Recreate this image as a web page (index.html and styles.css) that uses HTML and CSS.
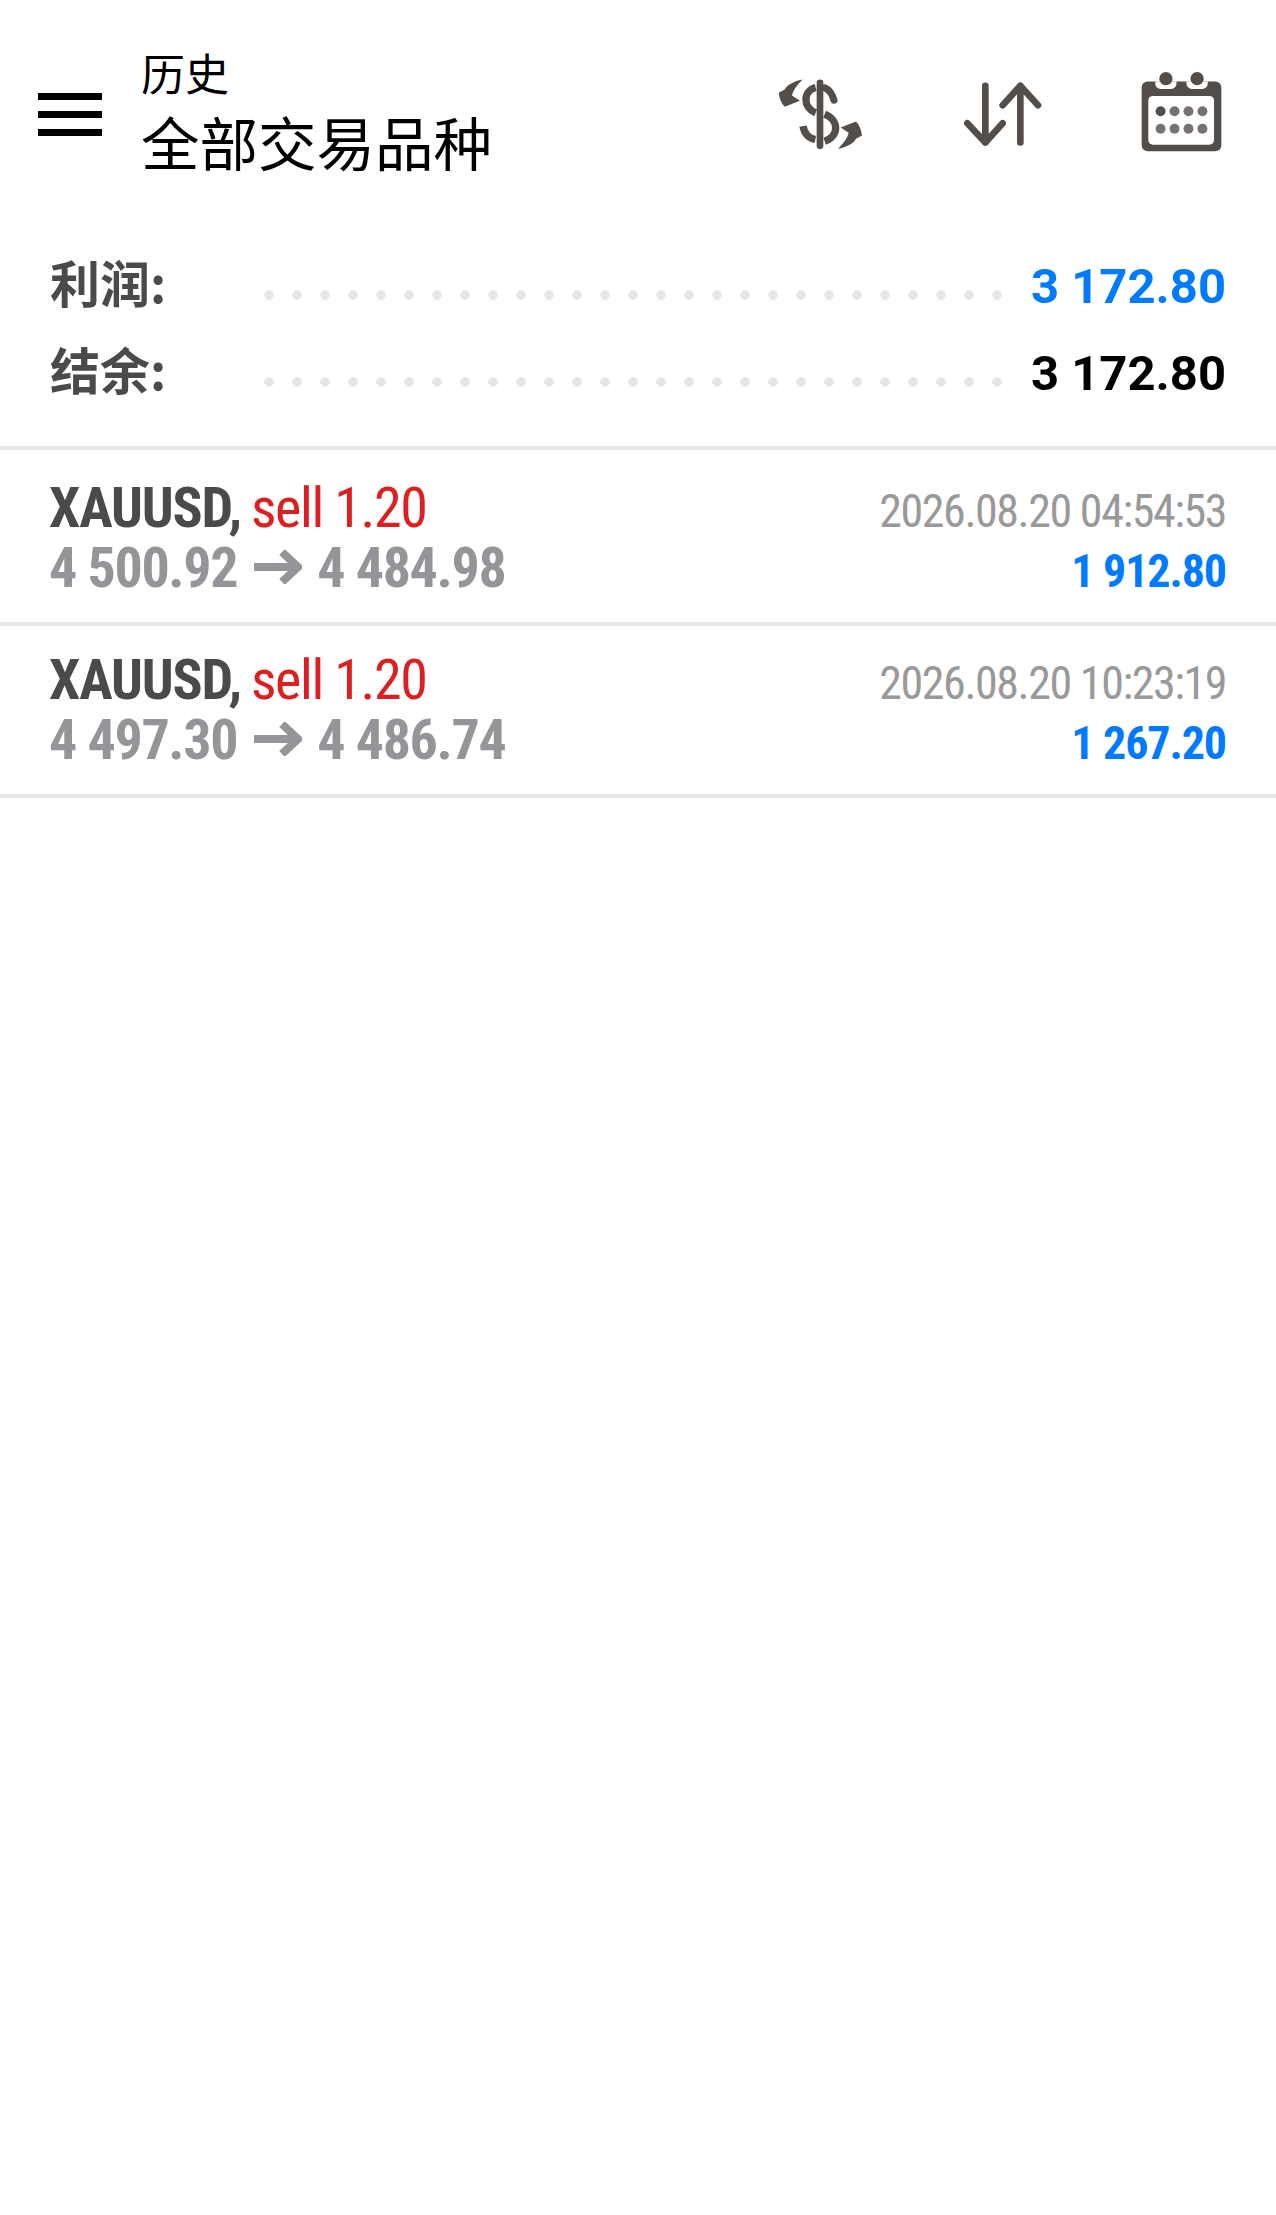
FILE: index.html
```html
<!DOCTYPE html>
<html lang="zh">
<head>
<meta charset="utf-8">
<title>历史</title>
<link rel="stylesheet" href="styles.css">
</head>
<body>
<header class="topbar">
  <div class="menu" aria-label="menu"><span></span><span></span><span></span></div>
  <div class="titles">
    <div class="title-small">历史</div>
    <div class="title-large">全部交易品种</div>
  </div>
  <div class="actions">
    <svg class="icon icon-dollar" viewBox="80 75 270 230">
      <g fill="none" stroke="#534e4a" stroke-linecap="round">
        <path stroke-width="20" d="M212 98V287"/>
        <path stroke-width="21" d="M254 150C248 130 238 118 226 113"/>
      </g>
      <g fill="none" stroke="#534e4a" stroke-width="22">
        <path d="M199 112C160 122 160 172 199 188"/>
        <path d="M226 192C270 210 270 258 226 273"/>
        <path d="M161 228C165 250 178 264 198 268"/>
      </g>
      <path fill="#534e4a" d="M160 88C130 94 112 106 106 118L88 128C90 145 96 160 106 170L152 152L128 136C132 118 146 102 160 88Z"/>
      <path fill="#534e4a" d="M266 296C296 290 314 278 320 266L338 256C336 239 330 224 320 214L274 232L298 248C294 266 280 282 266 296Z"/>
    </svg>
    <svg class="icon icon-sort" viewBox="640 90 240 200">
      <g fill="none" stroke="#534e4a" stroke-width="20" stroke-linecap="round" stroke-linejoin="round">
        <path d="M707 107V277M653 219L707 277L759 219"/>
        <path d="M812 277V107M759 165L812 107L865 165"/>
      </g>
    </svg>
    <svg class="icon icon-cal" viewBox="1175 62 250 250">
      <rect x="1180" y="97" width="240" height="210" rx="18" fill="#534e4a"/>
      <rect x="1200" y="140" width="198" height="147" rx="14" fill="#fff"/>
      <path fill="#fff" d="M1221 97h64v6a16 16 0 0 1-16 16h-32a16 16 0 0 1-16-16zM1315 97h64v6a16 16 0 0 1-16 16h-32a16 16 0 0 1-16-16z"/>
      <circle cx="1253" cy="88" r="20" fill="#534e4a"/>
      <circle cx="1347" cy="88" r="20" fill="#534e4a"/>
      <circle cx="1237" cy="186" r="15" fill="#534e4a"/>
      <g fill="#77726f">
        <circle cx="1279" cy="186" r="15"/><circle cx="1321" cy="186" r="15"/><circle cx="1363" cy="186" r="15"/>
        <circle cx="1237" cy="239" r="15"/><circle cx="1279" cy="239" r="15"/><circle cx="1321" cy="239" r="15"/><circle cx="1363" cy="239" r="15"/>
      </g>
    </svg>
  </div>
</header>

<section class="summary">
  <div class="sum-row">
    <span class="sum-label">利润:</span>
    <span class="dots"></span>
    <span class="sum-value blue">3 172.80</span>
  </div>
  <div class="sum-row">
    <span class="sum-label">结余:</span>
    <span class="dots"></span>
    <span class="sum-value">3 172.80</span>
  </div>
</section>

<section class="deals">
  <article class="deal">
    <div class="deal-line">
      <div class="cond-wrap"><span class="symbol">XAUUSD,</span> <span class="side">sell 1.20</span></div>
      <div class="time">2026.08.20 04:54:53</div>
    </div>
    <div class="deal-line">
      <div class="prices">4 500.92<svg class="arrow" viewBox="0 0 48 34"><path d="M0 17H44M28 2L44 17L28 32" fill="none" stroke="#939598" stroke-width="8"/></svg>4 484.98</div>
      <div class="profit">1 912.80</div>
    </div>
  </article>
  <article class="deal">
    <div class="deal-line">
      <div class="cond-wrap"><span class="symbol">XAUUSD,</span> <span class="side">sell 1.20</span></div>
      <div class="time">2026.08.20 10:23:19</div>
    </div>
    <div class="deal-line">
      <div class="prices">4 497.30<svg class="arrow" viewBox="0 0 48 34"><path d="M0 17H44M28 2L44 17L28 32" fill="none" stroke="#939598" stroke-width="8"/></svg>4 486.74</div>
      <div class="profit">1 267.20</div>
    </div>
  </article>
</section>
</body>
</html>
```
FILE: styles.css
```css
* { box-sizing: border-box; }
html, body { margin: 0; padding: 0; background: #fff; }
body {
  width: 1276px;
  height: 2215px;
  overflow: hidden;
  font-family: Roboto, "Noto Sans CJK SC", sans-serif;
}
.topbar {
  display: flex;
  align-items: flex-start;
  height: 226px;
  padding: 47px 53px 0 38px;
}
.menu {
  display: flex;
  flex-direction: column;
  gap: 11px;
  width: 64px;
  margin-top: 46px;
}
.menu span { display: block; height: 7px; background: #000; }
.titles { margin-left: 39px; color: #000; font-family: "Noto Sans CJK SC", sans-serif; }
.title-small { font-size: 44px; line-height: 50px; }
.title-large { font-size: 58.5px; line-height: 70px; margin-top: 9px; }
.actions { display: flex; margin-left: auto; }
.icon { display: block; flex: none; }
.icon-dollar { width: 90px; height: 77px; margin-top: 28px; }
.icon-sort { width: 80px; height: 67px; margin-top: 33px; margin-left: 97px; }
.icon-cal { width: 83px; height: 83px; margin-top: 23px; margin-left: 97px; }

.summary { height: 224px; padding: 17px 50px 0; border-bottom: 4px solid #e6e6e6; }
.sum-row { display: flex; align-items: center; height: 87px; }
.sum-label {
  width: 214px;
  margin-bottom: 11px;
  color: #4a4a4d;
  font-family: "Noto Sans CJK SC", sans-serif;
  font-weight: 700;
  font-size: 50px;
  line-height: 60px;
}
.dots {
  width: 738px;
  height: 10px;
  margin-top: 16px;
  background: radial-gradient(circle at 5px 5px, #e6e6e6 4.5px, transparent 5px) 0 0 / 28px 10px repeat-x;
}
.sum-value {
  margin-left: auto;
  color: #000;
  font-weight: 700;
  font-size: 49px;
  line-height: 60px;
  white-space: nowrap;
}
.blue { color: #007aff; }

.deals { padding-top: 4px; }
.deal { height: 172px; padding: 24px 50px 0 49px; border-bottom: 4px solid #e6e6e6; }
.deal-line { display: flex; justify-content: space-between; align-items: baseline; height: 60px; }
.cond-wrap, .prices, .time, .profit {
  font-stretch: condensed;
  white-space: nowrap;
  line-height: 60px;
}
.cond-wrap { font-size: 56px; }
.symbol { color: #4a4a4d; font-weight: 700; letter-spacing: -1.2px; }
.side { margin-left: -3px; color: #dd1f1f; letter-spacing: -1.4px; }
.prices { font-size: 56px; font-weight: 700; color: #939598; letter-spacing: -1.35px; }
.arrow { display: inline-block; width: 48px; height: 34px; margin: 0 15px 0 17px; vertical-align: 3px; }
.time { font-size: 46px; color: #999; letter-spacing: -1.45px; }
.profit { font-size: 46px; font-weight: 700; color: #007aff; letter-spacing: -1.1px; }
```
